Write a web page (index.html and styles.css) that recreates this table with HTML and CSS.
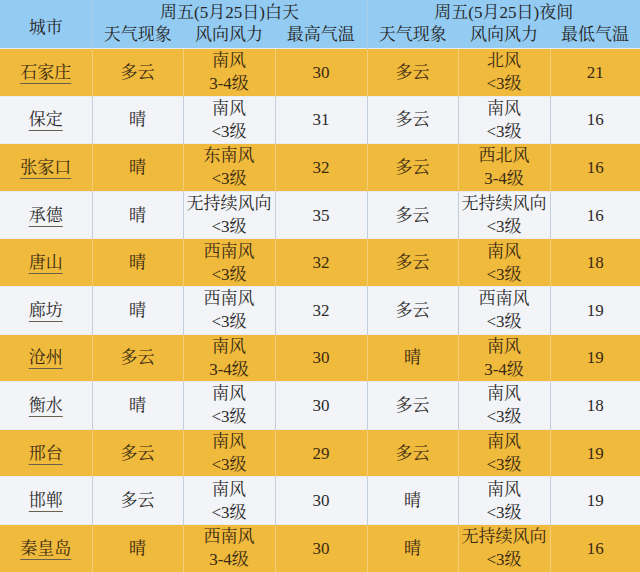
FILE: index.html
```html
<!DOCTYPE html>
<html lang="zh">
<head>
<meta charset="utf-8">
<link rel="stylesheet" href="styles.css">
</head>
<body>
<table class="wx">
  <colgroup>
    <col class="c1"><col class="c2"><col class="c3"><col class="c4"><col class="c5"><col class="c6"><col class="c7">
  </colgroup>
  <thead>
    <tr class="h1">
      <th rowspan="2" class="city-h">城市</th>
      <th colspan="3" class="grp">周五(5月25日)白天</th>
      <th colspan="3" class="grp">周五(5月25日)夜间</th>
    </tr>
    <tr class="h2">
      <th>天气现象</th><th>风向风力</th><th class="sep">最高气温</th>
      <th>天气现象</th><th>风向风力</th><th>最低气温</th>
    </tr>
  </thead>
  <tbody>
    <tr class="o"><td><span class="city">石家庄</span></td><td>多云</td><td>南风<br>3-4级</td><td>30</td><td>多云</td><td>北风<br>&lt;3级</td><td>21</td></tr>
    <tr class="w"><td><span class="city">保定</span></td><td>晴</td><td>南风<br>&lt;3级</td><td>31</td><td>多云</td><td>南风<br>&lt;3级</td><td>16</td></tr>
    <tr class="o"><td><span class="city">张家口</span></td><td>晴</td><td>东南风<br>&lt;3级</td><td>32</td><td>多云</td><td>西北风<br>3-4级</td><td>16</td></tr>
    <tr class="w"><td><span class="city">承德</span></td><td>晴</td><td>无持续风向<br>&lt;3级</td><td>35</td><td>多云</td><td>无持续风向<br>&lt;3级</td><td>16</td></tr>
    <tr class="o"><td><span class="city">唐山</span></td><td>晴</td><td>西南风<br>&lt;3级</td><td>32</td><td>多云</td><td>南风<br>&lt;3级</td><td>18</td></tr>
    <tr class="w"><td><span class="city">廊坊</span></td><td>晴</td><td>西南风<br>&lt;3级</td><td>32</td><td>多云</td><td>西南风<br>&lt;3级</td><td>19</td></tr>
    <tr class="o"><td><span class="city">沧州</span></td><td>多云</td><td>南风<br>3-4级</td><td>30</td><td>晴</td><td>南风<br>3-4级</td><td>19</td></tr>
    <tr class="w"><td><span class="city">衡水</span></td><td>晴</td><td>南风<br>&lt;3级</td><td>30</td><td>多云</td><td>南风<br>&lt;3级</td><td>18</td></tr>
    <tr class="o"><td><span class="city">邢台</span></td><td>多云</td><td>南风<br>&lt;3级</td><td>29</td><td>多云</td><td>南风<br>&lt;3级</td><td>19</td></tr>
    <tr class="w"><td><span class="city">邯郸</span></td><td>多云</td><td>南风<br>&lt;3级</td><td>30</td><td>晴</td><td>南风<br>&lt;3级</td><td>19</td></tr>
    <tr class="o"><td><span class="city">秦皇岛</span></td><td>晴</td><td>西南风<br>3-4级</td><td>30</td><td>晴</td><td>无持续风向<br>&lt;3级</td><td>16</td></tr>
  </tbody>
</table>
</body>
</html>
```

FILE: styles.css
```css
html, body {
  margin: 0;
  padding: 0;
  background: #f0ba3c;
}
body {
  width: 640px;
  height: 572px;
  overflow: hidden;
  font-family: "Liberation Serif", "Noto Serif CJK SC", "Noto Sans CJK SC", serif;
  font-size: 17px;
  color: #262626;
}
.wx {
  width: 640px;
  border-collapse: collapse;
  table-layout: fixed;
}
.c1 { width: 92px; }
.c2 { width: 91px; }
.c3 { width: 92px; }
.c4 { width: 92px; }
.c5 { width: 91px; }
.c6 { width: 92px; }
.c7 { width: 90px; }

thead th {
  background: #93cbf2;
  font-weight: normal;
  color: #262626;
  padding: 0;
  text-align: center;
  white-space: nowrap;
  box-sizing: border-box;
}
.h1 th.grp {
  height: 24px;
  line-height: 22px;
  padding-top: 2px;
  border-left: 1px solid #a9cdea;
}
.h2 th {
  height: 24px;
  line-height: 22px;
  padding-bottom: 2px;
}
.h2 th:nth-child(4) { border-left: 1px solid #a9cdea; }
.city-h {
  border-right: 1px solid #a9cdea;
  padding-top: 2px;
}

tbody td {
  height: 47.6px;
  box-sizing: border-box;
  padding: 0;
  text-align: center;
  vertical-align: middle;
  line-height: 23px;
  white-space: nowrap;
  border-left: 1px solid #c5cfdc;
  border-top: 1px solid #e9ecf2;
}
tbody td:first-child { border-left: none; }
tr.o td {
  background: #f0ba3c;
  color: #3a2a12;
  border-left-color: #f3cf7c;
}
tr.w td {
  background: #f3f4f8;
  color: #2b2b2b;
}
.city {
  text-decoration: underline;
  text-decoration-thickness: 1px;
  text-underline-offset: 5px;
  text-decoration-color: #6a6050;
}
```
